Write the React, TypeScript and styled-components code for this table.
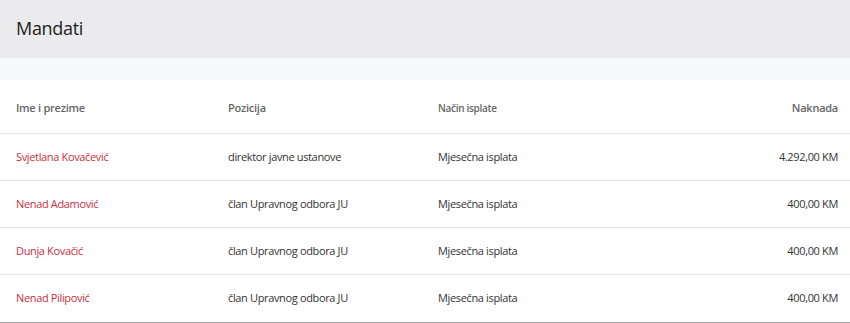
import React from "react";
import styled, { createGlobalStyle } from "styled-components";

const Global = createGlobalStyle`
  html, body { margin: 0; padding: 0; background: #fff; }
  body { font-family: "Open Sans", "Liberation Sans", sans-serif; }
`;

const Page = styled.div`
  width: 850px;
  display: flex;
  flex-direction: column;
`;

const TitleBar = styled.div`
  height: 58px;
  background: #ebebed;
  display: flex;
  align-items: center;
  padding: 0 16px;
  box-sizing: border-box;
`;

const Title = styled.h1`
  margin: 0 0 2px;
  font-size: 18px;
  font-weight: 400;
  letter-spacing: -0.3px;
  color: #222;
`;

const Spacer = styled.div`
  height: 22px;
  background: #f8f9fa;
`;

const Table = styled.div`
  display: grid;
  grid-template-columns: 212px 210px 1fr 200px;
  border-bottom: 1px solid #a8a8a8;
`;

const HeadCell = styled.div<{ $right?: boolean; $small?: boolean }>`
  height: 54px;
  display: flex;
  align-items: center;
  justify-content: ${(p) => (p.$right ? "flex-end" : "flex-start")};
  padding: ${(p) => (p.$right ? "2px 12px 0 0" : "2px 0 0 16px")};
  box-sizing: border-box;
  font-size: ${(p) => (p.$small ? "10px" : "11px")};
  letter-spacing: ${(p) => (p.$small ? "-0.3px" : "-0.25px")};
  font-weight: 600;
  color: #666;
  border-bottom: 1px solid #e3e3e3;
`;

const Cell = styled.div<{ $right?: boolean; $red?: boolean; $last?: boolean }>`
  height: 47px;
  display: flex;
  align-items: center;
  justify-content: ${(p) => (p.$right ? "flex-end" : "flex-start")};
  padding: ${(p) => (p.$right ? "0 12px 2px 0" : "0 0 2px 16px")};
  box-sizing: border-box;
  font-size: 11px;
  letter-spacing: -0.35px;
  color: ${(p) => (p.$red ? "#c9303c" : "#333")};
  border-bottom: ${(p) => (p.$last ? "none" : "1px solid #e3e3e3")};
`;

const rows = [
  ["Svjetlana Kovačević", "direktor javne ustanove", "Mjesečna isplata", "4.292,00 KM"],
  ["Nenad Adamović", "član Upravnog odbora JU", "Mjesečna isplata", "400,00 KM"],
  ["Dunja Kovačić", "član Upravnog odbora JU", "Mjesečna isplata", "400,00 KM"],
  ["Nenad Pilipović", "član Upravnog odbora JU", "Mjesečna isplata", "400,00 KM"],
];

export default function App() {
  return (
    <Page>
      <Global />
      <TitleBar>
        <Title>Mandati</Title>
      </TitleBar>
      <Spacer />
      <Table>
        <HeadCell>Ime i prezime</HeadCell>
        <HeadCell>Pozicija</HeadCell>
        <HeadCell $small>Način isplate</HeadCell>
        <HeadCell $right>Naknada</HeadCell>
        {rows.map((r, i) => {
          const last = i === rows.length - 1;
          return (
            <React.Fragment key={i}>
              <Cell $red $last={last}>{r[0]}</Cell>
              <Cell $last={last}>{r[1]}</Cell>
              <Cell $last={last}>{r[2]}</Cell>
              <Cell $right $last={last}>{r[3]}</Cell>
            </React.Fragment>
          );
        })}
      </Table>
    </Page>
  );
}
